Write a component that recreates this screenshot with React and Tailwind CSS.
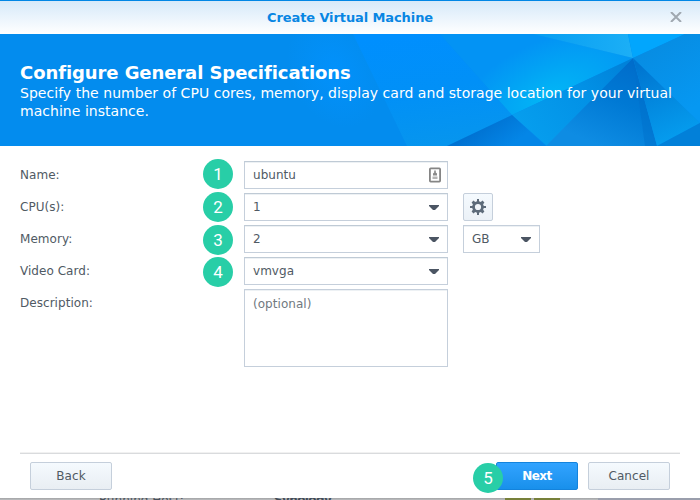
import React from 'react';

const Arrow = () => (
  <svg className="mr-[8px] h-[5px] w-[10px] shrink-0" viewBox="0 0 10 5">
    <path d="M0 0h10v1L6 5H4L0 1z" fill="#4b5563" />
  </svg>
);

const Step = ({ n, className }) => (
  <span
    className={`absolute flex h-[30px] w-[30px] items-center justify-center rounded-full bg-[#28cea7] font-['Roboto',sans-serif] text-[17px] leading-none text-white ${className}`}
  >
    {n}
  </span>
);

const Field = ({ label, value, step, stepClass, children, icon }) => (
  <div className="relative flex h-7 items-center">
    <label className="w-[224px] shrink-0">{label}</label>
    <Step n={step} className={stepClass} />
    <div className="flex h-7 w-[204px] items-center justify-between border border-[#c5cfdb] border-t-[#bfcad5] bg-white pl-[8px] shadow-[inset_0_1px_0_#edf1f4]">
      <span>{value}</span>
      {icon || <Arrow />}
    </div>
    {children}
  </div>
);

const ContactIcon = () => (
  <svg className="mr-[6px] h-4 w-3" viewBox="0 0 12 16">
    <rect x="0.9" y="1.4" width="10.2" height="13.2" rx="0.8" fill="#fff" stroke="#858585" strokeWidth="1.8" />
    <path d="M5.2 3.5h1.6v2l1.2 1v2H4v-2l1.2-1z" fill="#8b8b8b" />
    <path d="M3.5 9.5h5v2.5h-5z" fill="#b5b5b5" />
  </svg>
);

const Gear = () => (
  <svg className="h-4 w-4" viewBox="0 0 16 16">
    <path
      fill="#5d6b7a"
      fillRule="evenodd"
      d="M7 0h2v2.2l1.8.7L12.5 1.6 14.4 3.5 13.1 5.2 13.8 7H16v2h-2.2l-.7 1.8 1.3 1.7-1.9 1.9-1.7-1.3-1.8.7V16H7v-2.2l-1.8-.7-1.7 1.3-1.9-1.9 1.3-1.7L2.2 9H0V7h2.2l.7-1.8L1.6 3.5 3.5 1.6l1.7 1.3L7 2.2zM8 4.9a3.1 3.1 0 1 0 0 6.2a3.1 3.1 0 1 0 0-6.2z"
    />
  </svg>
);

const BannerArt = () => (
  <svg className="absolute top-0 right-0 h-[112px] w-[420px]" viewBox="280 34 420 112" preserveAspectRatio="none">
    <defs>
      <radialGradient id="left" gradientUnits="userSpaceOnUse" cx="0" cy="0" r="1" gradientTransform="translate(335 70) rotate(65) scale(60 45)">
        <stop offset="0" stopColor="#0291fb" />
        <stop offset="1" stopColor="#038cee" />
      </radialGradient>
      <linearGradient id="mid" gradientUnits="userSpaceOnUse" x1="410" y1="34" x2="425" y2="146">
        <stop offset="0" stopColor="#008ffe" />
        <stop offset="0.5" stopColor="#0190f7" />
        <stop offset="1" stopColor="#0695ee" />
      </linearGradient>
      <radialGradient id="glow" gradientUnits="userSpaceOnUse" cx="0" cy="0" r="1" gradientTransform="translate(550 96) rotate(-25) scale(105 55)">
        <stop offset="0" stopColor="#02b6f6" />
        <stop offset="0.5" stopColor="#02a4f4" />
        <stop offset="1" stopColor="#0393f4" />
      </radialGradient>
      <linearGradient id="top" x1="0" x2="1">
        <stop offset="0" stopColor="#079df1" />
        <stop offset="1" stopColor="#1caff6" />
      </linearGradient>
      <linearGradient id="band" gradientUnits="userSpaceOnUse" x1="530" y1="140" x2="625" y2="65">
        <stop offset="0" stopColor="#069eee" />
        <stop offset="0.6" stopColor="#0291e6" />
        <stop offset="1" stopColor="#0082d9" />
      </linearGradient>
      <linearGradient id="deep" gradientUnits="userSpaceOnUse" x1="635" y1="65" x2="600" y2="146">
        <stop offset="0" stopColor="#006dcb" />
        <stop offset="0.45" stopColor="#0079d4" />
        <stop offset="1" stopColor="#0e8ce3" />
      </linearGradient>
      <linearGradient id="low" gradientUnits="userSpaceOnUse" x1="485" y1="123" x2="505" y2="150">
        <stop offset="0" stopColor="#0072d2" />
        <stop offset="1" stopColor="#0486e7" />
      </linearGradient>
      <linearGradient id="right" gradientUnits="userSpaceOnUse" x1="650" y1="50" x2="690" y2="110">
        <stop offset="0" stopColor="#078de3" />
        <stop offset="1" stopColor="#0698f2" />
      </linearGradient>
      <linearGradient id="shard" gradientUnits="userSpaceOnUse" x1="640" y1="65" x2="672" y2="140">
        <stop offset="0" stopColor="#0075d0" />
        <stop offset="1" stopColor="#059cee" />
      </linearGradient>
    </defs>
    <path d="M280 34h74l54 112H280z" fill="url(#left)" />
    <path d="M353 34h87l72 81-65 31h-40z" fill="url(#mid)" />
    <path d="M440 34h94l99 24-121 57z" fill="url(#glow)" />
    <path d="M533 34h95l5 24z" fill="url(#top)" />
    <path d="M628 34h57l-52 24z" fill="#02a6fd" />
    <path d="M633 58L512 115l35 31z" fill="url(#band)" />
    <path d="M447 146l65-31 34 31z" fill="url(#low)" />
    <path d="M546 146l87-88 24 88z" fill="url(#deep)" />
    <path d="M633 58l12 88h12z" fill="#006fc9" opacity=".45" />
    <path d="M633 58l52-24h15v89z" fill="url(#right)" />
    <path d="M633 58l67 65-43 23z" fill="url(#shard)" />
    <path d="M657 146l43-23v23z" fill="#0280d9" />
  </svg>
);

export default function App() {
  return (
    <div className="relative flex h-[500px] w-[700px] flex-col overflow-hidden bg-white font-['Verdana','DejaVu_Sans',sans-serif] text-[12px] leading-4 tracking-[0.04px] text-[#505a64]">
      <header className="relative flex h-[34px] shrink-0 items-center justify-center border-t border-[#0086e5] bg-linear-to-b from-[#d6e9f9] to-white">
        <h1 className="text-[13px] font-bold tracking-[-0.1px] text-[#0886e3]">Create Virtual Machine</h1>
        <svg className="absolute top-[11px] right-[18px] h-[10px] w-3" viewBox="0 0 12 10">
          <path d="M1 0l10 10M11 0L1 10" stroke="#a0a8b0" strokeWidth="2" />
        </svg>
      </header>

      <section className="relative h-[112px] shrink-0 bg-[#038cee] pt-[28px] pl-5 text-white">
        <BannerArt />
        <div className="relative">
          <h2 className="text-[18px] leading-[22px] font-bold tracking-[-0.08px] whitespace-nowrap">Configure General Specifications</h2>
          <p className="text-[14px] leading-[18px] tracking-[0.035px] whitespace-nowrap">
            Specify the number of CPU cores, memory, display card and storage location for your virtual
            <br />
            machine instance.
          </p>
        </div>
      </section>

      <main className="flex h-[306px] shrink-0 flex-col gap-1 px-5 pt-[15px]">
        <Field label="Name:" value="ubuntu" step="1" stepClass="left-[183px] top-[-2px]" icon={<ContactIcon />} />
        <Field label="CPU(s):" value="1" step="2" stepClass="left-[183px] top-[-1px]">
          <button className="ml-[15px] flex h-7 w-[30px] items-center justify-center rounded-[2px] border border-[#c5cfdb] bg-linear-to-b from-[#f5fafe] to-[#ebf1f7]">
            <Gear />
          </button>
        </Field>
        <Field label="Memory:" value="2" step="3" stepClass="left-[183px] top-0">
          <div className="ml-[15px] flex h-7 w-[77px] items-center justify-between border border-[#c5cfdb] bg-white pl-[8px] shadow-[inset_0_1px_0_#edf1f4]">
            <span>GB</span>
            <Arrow />
          </div>
        </Field>
        <Field label="Video Card:" value="vmvga" step="4" stepClass="left-[183px] top-0" />
        <div className="flex">
          <label className="w-[224px] shrink-0 pt-[6px]">Description:</label>
          <div className="h-[78px] w-[204px] border border-[#c5cfdb] pt-[6px] pl-[8px] text-[#717980] shadow-[inset_0_1px_0_#edf1f4]">
            (optional)
          </div>
        </div>
      </main>

      <footer className="flex h-[46px] shrink-0 flex-col px-5">
        <div className="h-[2px] shrink-0 border-b border-[#d9dbdd] bg-[#f1f1f1]" />
        <div className="flex px-[10px] pt-2">
          <button className="h-7 w-[82px] rounded-[2px] border border-[#c5cfdb] bg-linear-to-b from-[#f5fafe] to-[#e9eef3]">Back</button>
          <div className="relative ml-auto">
            <button className="h-7 w-[82px] rounded-[2px] border border-[#1483dc] bg-linear-to-b from-[#31a3ff] to-[#1890eb] font-bold tracking-[-0.6px] text-white">
              Next
            </button>
            <Step n="5" className="top-[1px] left-[-23px]" />
          </div>
          <button className="ml-[10px] h-7 w-[82px] rounded-[2px] border border-[#c5cfdb] bg-linear-to-b from-[#f5fafe] to-[#e9eef3]">Cancel</button>
        </div>
      </footer>
      <div className="flex h-[2px] shrink-0 overflow-hidden bg-linear-to-b from-[#a2a3a5] to-[#bcbec0] pl-[99px] text-[#4a525b]">
        <span className="-mt-[6px] w-[175px] shrink-0">Running Host:</span>
        <span className="-mt-[6px] w-[231px] shrink-0 text-[12px] font-bold tracking-[-0.6px] text-[#414b57]">Synology</span>
        <span className="h-[2px] w-[26px] shrink-0 bg-[#77803a]" />
        <span className="ml-[3px] h-[2px] w-[26px] shrink-0 bg-[#77803a]" />
        <span className="ml-[38px] h-[2px] grow bg-[#9a9eac]" />
      </div>
    </div>
  );
}
